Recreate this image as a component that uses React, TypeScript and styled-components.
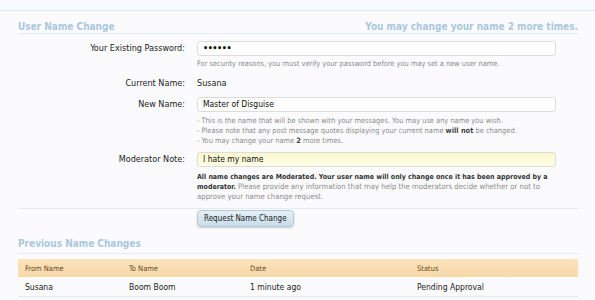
import * as React from "react";
import styled, { createGlobalStyle } from "styled-components";

const Global = createGlobalStyle`
    html, body {
        margin: 0;
        padding: 0;
        background: #f9fafd;
    }
    body {
        font-family: "DejaVu Sans Condensed", "DejaVu Sans", sans-serif;
        color: #222;
    }
`;

const Page = styled.div`
    width: 595px;
    height: 300px;
    overflow: hidden;
    padding-top: 10px;
    box-sizing: border-box;
`;

const Sheet = styled.div`
    border-top: 1px solid #dde8ee;
    background: #fbfbfd;
    padding: 9px 17px 0 18px;
`;

const Heading = styled.h2`
    display: flex;
    justify-content: space-between;
    align-items: baseline;
    margin: 0;
    padding: 0;
    font-size: 10px;
    line-height: 13px;
    font-weight: bold;
    color: #a9c8dd;
    border-bottom: 1px solid #e3ebf0;
`;

const Form = styled.div`
    display: grid;
    grid-template-columns: 167px 359px;
    column-gap: 12px;
    padding-top: 7px;
`;

const Label = styled.div<{ $top?: number }>`
    text-align: right;
    font-size: 9px;
    line-height: 11px;
    padding-top: ${({ $top }) => $top ?? 2}px;
    color: #222;
`;

const Field = styled.div<{ $gap?: number }>`
    padding-bottom: ${({ $gap }) => $gap ?? 10}px;
`;

const Input = styled.div<{ $note?: boolean }>`
    height: 15px;
    box-sizing: border-box;
    border: 1px solid #dcdcdc;
    border-radius: 3px;
    background: ${({ $note }) =>
        $note ? "linear-gradient(#fbf8cf, #ffffe6)" : "#ffffff"};
    font-size: 8.5px;
    line-height: 13px;
    padding-left: 5px;
    color: #111;
`;

const Dots = styled.span`
    font-size: 9px;
    letter-spacing: -0.5px;
    font-weight: bold;
`;

const Value = styled.div`
    font-size: 9px;
    line-height: 11px;
`;

const Hint = styled.div<{ $mt?: number; $size?: number }>`
    font-size: ${({ $size }) => $size ?? 7.4}px;
    line-height: 10px;
    margin-top: ${({ $mt }) => $mt ?? 4}px;
    color: #8a8a8a;
    b {
        color: #444;
    }
`;

const Strong = styled.span`
    font-size: 7px;
    font-weight: bold;
    color: #333;
`;

const Separator = styled.div`
    border-top: 1px solid #e6ebef;
    padding: 1px 0 0 179px;
`;

const Button = styled.button`
    display: block;
    font-family: inherit;
    font-size: 8px;
    color: #222;
    height: 17px;
    padding: 0 6px;
    border: 1px solid #b7cbd8;
    border-radius: 4px;
    background: linear-gradient(#e6f0f6, #c7dce9);
    box-shadow: 0 1px 2px rgba(0, 0, 0, 0.2);
`;

const SubHeading = styled(Heading)`
    margin-top: 10px;
    padding-bottom: 3px;
`;

const Table = styled.table`
    width: 100%;
    border-collapse: collapse;
    margin-top: 5px;
    font-size: 8.5px;
`;

const Th = styled.th`
    text-align: left;
    font-weight: normal;
    font-size: 7.5px;
    color: #6b4a1c;
    background: linear-gradient(#fbe3bc, #f8d9a8);
    height: 18px;
    padding: 0 7px;
`;

const Td = styled.td`
    height: 19px;
    padding: 0 7px;
    border-bottom: 1px solid #e6e9ee;
`;

export default function App() {
    return (
        <Page>
            <Global />
            <Sheet>
                <Heading>
                    <span>User Name Change</span>
                    <span>You may change your name 2 more times.</span>
                </Heading>
                <Form>
                    <Label>Your Existing Password:</Label>
                    <Field $gap={9}>
                        <Input>
                            <Dots>••••••</Dots>
                        </Input>
                        <Hint $mt={3}>
                            For security reasons, you must verify your password before you may set a new user name.
                        </Hint>
                    </Field>
                    <Label $top={0}>Current Name:</Label>
                    <Field $gap={8}>
                        <Value>Susana</Value>
                    </Field>
                    <Label>New Name:</Label>
                    <Field $gap={6}>
                        <Input>Master of Disguise</Input>
                        <Hint>
                            - This is the name that will be shown with your messages. You may use any name you wish.
                            <br />- Please note that any post message quotes displaying your current name <b>will not</b> be changed.
                            <br />- You may change your name <b>2</b> more times.
                        </Hint>
                    </Field>
                    <Label>Moderator Note:</Label>
                    <Field $gap={6}>
                        <Input $note>I hate my name</Input>
                        <Hint $mt={5} $size={7.7}>
                            <Strong>
                                All name changes are Moderated. Your user name will only change once it has been approved by a
                            </Strong>{" "}
                            <Strong>moderator.</Strong> Please provide any information that may help the moderators decide whether or not to approve your name change request.
                        </Hint>
                    </Field>
                </Form>
                <Separator>
                    <Button>Request Name Change</Button>
                </Separator>
                <SubHeading>
                    <span>Previous Name Changes</span>
                </SubHeading>
                <Table>
                    <thead>
                        <tr>
                            <Th style={{ width: 90 }}>From Name</Th>
                            <Th style={{ width: 107 }}>To Name</Th>
                            <Th style={{ width: 153 }}>Date</Th>
                            <Th>Status</Th>
                        </tr>
                    </thead>
                    <tbody>
                        <tr>
                            <Td>Susana</Td>
                            <Td>Boom Boom</Td>
                            <Td>1 minute ago</Td>
                            <Td>Pending Approval</Td>
                        </tr>
                    </tbody>
                </Table>
            </Sheet>
        </Page>
    );
}
